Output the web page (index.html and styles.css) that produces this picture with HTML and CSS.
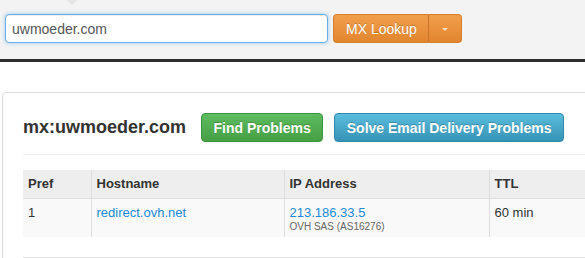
FILE: index.html
```html
<!DOCTYPE html>
<html lang="en">
<head>
  <meta charset="UTF-8" />
  <title>MX Lookup</title>
  <link rel="stylesheet" href="styles.css">
</head>
<body>

<!-- Search bar -->
<div class="searchbar">
  <span class="tab-arrow"></span>
  <form class="lookup">
    <input type="text" class="lookup-input" value="uwmoeder.com" />
    <div class="btn-group">
      <button type="button" class="btn btn-warning btn-main">MX Lookup</button>
      <button type="button" class="btn btn-warning btn-caret"><span class="caret"></span></button>
    </div>
  </form>
</div>
<div class="darkrule"></div>

<!-- Result panel -->
<div class="panel">
  <div class="result-head">
    <h2>mx:uwmoeder.com</h2>
    <button class="btn btn-success">Find Problems</button>
    <button class="btn btn-info">Solve Email Delivery Problems</button>
  </div>

  <table class="results">
    <colgroup>
      <col style="width: 68px">
      <col style="width: 193px">
      <col style="width: 205px">
      <col>
    </colgroup>
    <thead>
      <tr>
        <th>Pref</th>
        <th>Hostname</th>
        <th>IP Address</th>
        <th>TTL</th>
      </tr>
    </thead>
    <tbody>
      <tr>
        <td>1</td>
        <td><a href="#">redirect.ovh.net</a></td>
        <td><a href="#">213.186.33.5</a><small>OVH SAS (AS16276)</small></td>
        <td>60 min</td>
      </tr>
    </tbody>
  </table>

  <div class="next-section">
    <span class="cell first"></span>
    <span class="cell"></span>
  </div>
</div>

</body>
</html>
```

FILE: styles.css
```css
html, body {
  margin: 0;
  padding: 0;
  overflow: hidden;
  background-color: white;
  font-family: "Liberation Sans", Arial, sans-serif;
  color: #333;
}
.searchbar {
  position: relative;
  background-color: #f3f3f3;
  padding: 14px 5px 16px;
}
.tab-arrow {
  position: absolute;
  top: 0;
  left: 66px;
  width: 0;
  height: 0;
  border-top: 5px solid #e6e6e6;
  border-left: 6px solid transparent;
  border-right: 6px solid transparent;
}
.lookup {
  display: flex;
  gap: 5px;
  margin: 0;
}
.lookup-input {
  width: 323px;
  height: 29px;
  box-sizing: border-box;
  padding: 0 6px;
  font-family: inherit;
  font-size: 14px;
  color: #555;
  border: 1px solid #66afe9;
  border-radius: 4px;
  outline: none;
  box-shadow: inset 0 1px 1px rgba(0,0,0,.075), 0 0 4px rgba(102,175,233,.6);
}
.btn-group { display: flex; }
.btn {
  height: 29px;
  box-sizing: border-box;
  padding: 0 11.5px;
  font-family: inherit;
  font-size: 14px;
  color: white;
  white-space: nowrap;
  border: 1px solid transparent;
  border-radius: 4px;
  text-shadow: 0 -1px 0 rgba(0,0,0,.2);
  cursor: pointer;
}
.btn-warning {
  background-image: linear-gradient(to bottom, #f19f4c 0, #e2852f 100%);
  border-color: #d67e2c;
}
.btn-main {
  padding: 0 11px 0 12px;
  border-top-right-radius: 0;
  border-bottom-right-radius: 0;
  border-right: 1px solid #c9732a;
}
.btn-caret {
  width: 33px;
  padding: 0;
  border-left: none;
  border-top-left-radius: 0;
  border-bottom-left-radius: 0;
}
.caret {
  display: inline-block;
  width: 0;
  height: 0;
  vertical-align: middle;
  border-top: 3px solid #f6dcc0;
  border-left: 3px solid transparent;
  border-right: 3px solid transparent;
}
.btn-success {
  font-weight: bold;
  background-image: linear-gradient(to bottom, #5fbb5f 0, #45a045 100%);
  border-color: #3e933e;
}
.btn-info {
  font-weight: bold;
  background-image: linear-gradient(to bottom, #5bbddd 0, #3693b5 100%);
  border-color: #2f89ab;
}
.darkrule {
  height: 3px;
  background-color: #2d2d2d;
}
.panel {
  width: 680px;
  margin: 30px 0 0 2px;
  padding: 20px 20px 0;
  border: 1px solid #ddd;
  border-radius: 4px;
  height: 300px;
}
.result-head {
  display: flex;
  align-items: center;
  padding-bottom: 12px;
  border-bottom: 1px solid #eee;
}
.result-head h2 {
  margin: 0 15px 0 0;
  font-size: 18px;
  line-height: 21px;
}
.result-head .btn-info { margin-left: 11px; }
.results {
  width: 100%;
  margin-top: 15px;
  border-collapse: collapse;
  table-layout: fixed;
  font-size: 13px;
}
.results th, .results td {
  padding: 5px;
  line-height: 18px;
  text-align: left;
  vertical-align: top;
}
.results th + th, .results td + td {
  border-left: 1px solid #ddd;
}
.results th {
  background-color: #eee;
  border-bottom: 1px solid #ddd;
}
.results td { background-color: #f9f9f9; }
.results a {
  color: #2189d6;
  text-decoration: none;
}
.results small {
  display: block;
  font-size: 10px;
  line-height: 10px;
  color: #666;
}
.next-section {
  display: flex;
  margin-top: 20px;
  border-top: 1px solid #e5e5e5;
}
.next-section .cell {
  height: 10px;
  width: 383px;
  border-left: 1px solid #e5e5e5;
}
.next-section .first {
  width: 62px;
  border-left: none;
}
```
